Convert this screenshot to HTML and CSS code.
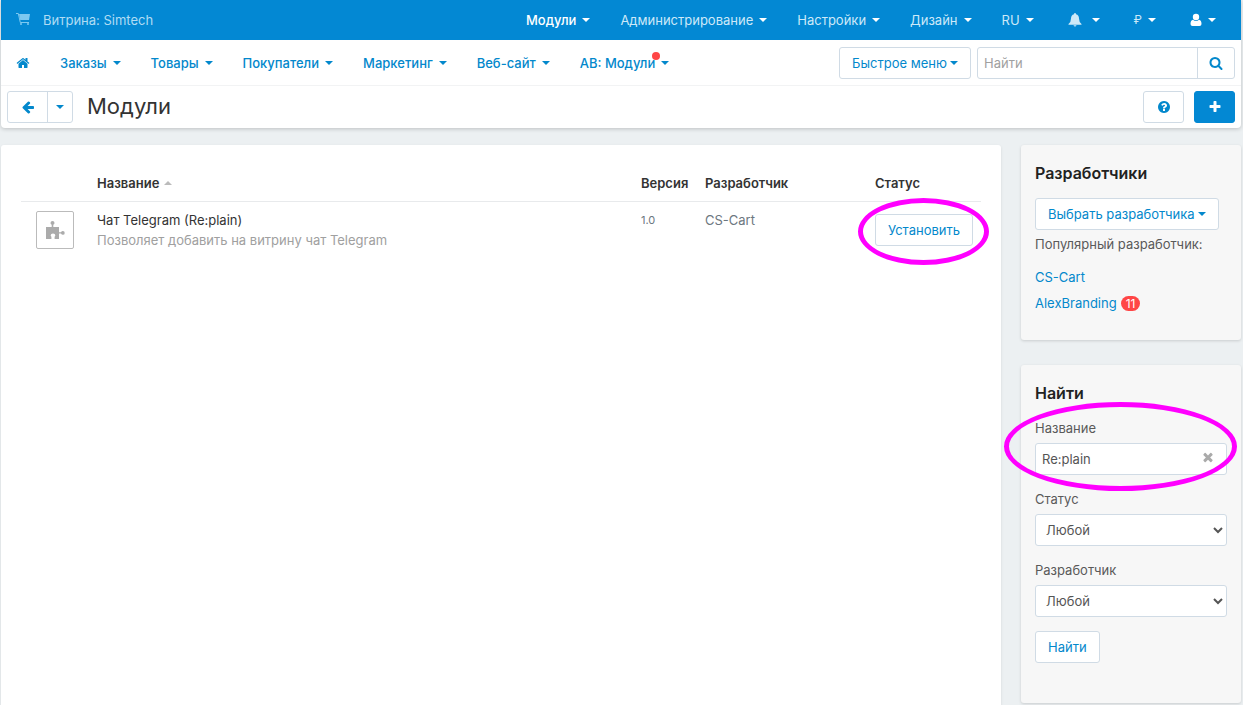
FILE: index.html
```html
<!DOCTYPE html>
<html lang="ru">
<head>
<meta charset="utf-8">
<meta name="viewport" content="width=device-width, initial-scale=1">
<title>Модули</title>
<link rel="stylesheet" href="styles.css">
</head>
<body>
<div class="page">
  <header class="header">
    <div class="topbar">
      <a class="storefront" href="#">
        <svg class="cart-icon" viewBox="0 0 14 14" aria-hidden="true"><path d="M0 .5h2.300L4.300 9.500H13" fill="none" stroke="currentColor"/><path d="M3 1h11l-1 6H4.200z" fill="currentColor"/><circle cx="5" cy="11" r="1" fill="currentColor"/><circle cx="12" cy="11" r="1" fill="currentColor"/></svg>
        <span>Витрина: Simtech</span>
      </a>
      <nav class="menu menu-top" aria-label="Настройки магазина">
        <a class="active" href="#">Модули<i class="caret"></i></a>
        <a href="#">Администрирование<i class="caret"></i></a>
        <a href="#">Настройки<i class="caret"></i></a>
        <a href="#">Дизайн<i class="caret"></i></a>
        <a href="#">RU<i class="caret"></i></a>
        <a class="symbol notify" href="#" aria-label="Уведомления"><svg class="bell-icon" viewBox="0 0 14 14" aria-hidden="true"><path d="M7 0q1 0 1 1.200 3 .8 3 4.300 0 3.500 2.500 5.500v.7H.5V11Q3 9 3 5.500 3 2 6 1.200 6 0 7 0zM5.500 12.200h3q-.3 1.300-1.500 1.300t-1.500-1.300z" fill="currentColor"/></svg><i class="caret"></i></a>
        <a class="symbol currency" href="#">₽<i class="caret"></i></a>
        <a class="symbol active" href="#" aria-label="Профиль"><svg class="user-icon" viewBox="0 0 12 14" aria-hidden="true"><circle cx="6" cy="4" r="3.200" fill="currentColor"/><path d="M3 6.700Q.5 7 .5 11 .5 13 2.500 13h7q2 0 2-2 0-4-2.500-4.300Q6 9.200 3 6.700z" fill="currentColor"/></svg><i class="caret"></i></a>
      </nav>
    </div>
    <div class="navbar">
      <nav class="menu menu-main" aria-label="Главное меню">
        <a href="#" aria-label="Главная"><svg class="icon" viewBox="0 0 1792 1792" aria-hidden="true"><path fill="currentColor" d="M1472 992v480q0 26-19 45t-45 19h-384v-384h-256v384h-384q-26 0-45-19t-19-45v-480q0-1 .5-3t.5-3l575-474 575 474q1 2 1 6zm223-69l-62 74q-8 9-21 11h-3q-13 0-21-7l-692-577-692 577q-12 8-24 7-13-2-21-11l-62-74q-8-10-7-23.500t11-21.500l719-599q32-26 76-26t76 26l244 204v-195q0-14 9-23t23-9h192q14 0 23 9t9 23v408l219 182q10 8 11 21.500t-7 23.500z"/></svg></a>
        <a href="#">Заказы<i class="caret"></i></a>
        <a href="#">Товары<i class="caret"></i></a>
        <a href="#">Покупатели<i class="caret"></i></a>
        <a href="#">Маркетинг<i class="caret"></i></a>
        <a href="#">Веб-сайт<i class="caret"></i></a>
        <a href="#"><span class="with-dot">AB: Модули</span><i class="caret"></i></a>
      </nav>
      <div class="tools">
        <button class="btn" type="button">Быстрое меню<i class="caret"></i></button>
        <form class="search">
          <input type="text" placeholder="Найти" aria-label="Найти">
          <button type="button" aria-label="Искать"><svg class="icon" viewBox="0 0 1792 1792" aria-hidden="true"><path fill="currentColor" d="M1216 832q0-185-131.500-316.500t-316.500-131.500-316.500 131.500-131.500 316.500 131.500 316.500 316.500 131.500 316.500-131.500 131.500-316.500zm512 832q0 52-38 90t-90 38q-54 0-90-38l-343-342q-179 124-399 124-143 0-273.500-55.500t-225-150-150-225-55.500-273.500 55.500-273.500 150-225 225-150 273.500-55.500 273.500 55.500 225 150 150 225 55.500 273.500q0 220-124 399l343 343q37 37 37 90z"/></svg></button>
        </form>
      </div>
    </div>
    <div class="actions">
      <div class="back">
        <button type="button" aria-label="Назад"><svg class="icon" viewBox="0 0 1792 1792" aria-hidden="true"><path fill="currentColor" d="M1664 896v128q0 53-32.500 90.500t-84.500 37.500h-704l293 294q38 36 38 90t-38 90l-75 76q-37 37-90 37-52 0-91-37l-651-652q-37-37-37-90 0-52 37-91l651-650q38-38 91-38 52 0 90 38l75 74q38 38 38 91t-38 91l-293 293h704q52 0 84.500 37.500t32.500 90.500z"/></svg></button>
        <button class="back-more" type="button" aria-label="История"><i class="caret"></i></button>
      </div>
      <h1>Модули</h1>
      <button class="btn btn-icon" type="button" aria-label="Помощь"><svg class="icon" viewBox="0 0 1792 1792" aria-hidden="true"><path fill="currentColor" d="M1024 1376v-192q0-14-9-23t-23-9h-192q-14 0-23 9t-9 23v192q0 14 9 23t23 9h192q14 0 23-9t9-23zm256-672q0-88-55.500-163t-138.500-116-170-41q-243 0-371 213-15 24 8 42l132 100q7 6 19 6 16 0 25-12 53-68 86-92 34-24 86-24 48 0 85.500 26t37.500 59q0 38-20 61t-68 45q-63 28-115.500 86.500t-52.500 125.500v36q0 14 9 23t23 9h192q14 0 23-9t9-23q0-19 21.500-49.500t54.500-49.500q32-18 49-28.500t46-35 44.500-48 28-60.500 12.500-81zm384 192q0 209-103 385.500t-279.500 279.500-385.500 103-385.500-103-279.500-279.500-103-385.500 103-385.500 279.500-279.500 385.500-103 385.500 103 279.500 279.500 103 385.500z"/></svg></button>
      <button class="btn btn-icon btn-primary" type="button" aria-label="Добавить"><svg class="icon" viewBox="0 0 1792 1792" aria-hidden="true"><path fill="currentColor" d="M1600 736v192q0 40-28 68t-68 28h-416v416q0 40-28 68t-68 28h-192q-40 0-68-28t-28-68v-416h-416q-40 0-68-28t-28-68v-192q0-40 28-68t68-28h416v-416q0-40 28-68t68-28h192q40 0 68 28t28 68v416h416q40 0 68 28t28 68z"/></svg></button>
    </div>
  </header>

  <div class="columns">
    <main class="content">
      <table class="addons">
        <thead>
          <tr>
            <th class="col-icon"></th>
            <th><a class="sort" href="#">Название<i class="sort-mark"></i></a></th>
            <th class="col-version">Версия</th>
            <th class="col-vendor">Разработчик</th>
            <th class="col-status">Статус</th>
          </tr>
        </thead>
        <tbody>
          <tr>
            <td class="col-icon"><span class="thumb"><svg class="puzzle-icon" viewBox="0 0 20 20" aria-hidden="true"><path fill="currentColor" d="M1 7h5.700V4.700Q5.500 4 5.500 2.900q0-2 2-2t2 2q0 1.100-1.200 1.800V7H14v5.200h2q.6-1.200 1.900-1.200 1.800 0 1.800 1.900t-1.800 1.900q-1.300 0-1.900-1.200h-2V19H9.600v-2.200q.7-.6.700-1.500 0-1.900-2.300-1.900t-2.300 1.900q0 .9.700 1.500V19H1z"/></svg></span></td>
            <td><a class="name" href="#">Чат Telegram (Re:plain)</a><div class="description">Позволяет добавить на витрину чат Telegram</div></td>
            <td class="version">1.0</td>
            <td>CS-Cart</td>
            <td class="col-status"><span class="mark mark-button"><button class="btn" type="button">Установить</button></span></td>
          </tr>
        </tbody>
      </table>
    </main>

    <aside class="sidebar">
      <section class="card">
        <h2>Разработчики</h2>
        <button class="btn" type="button">Выбрать разработчика<i class="caret"></i></button>
        <p>Популярный разработчик:</p>
        <ul class="vendors">
          <li><a href="#">CS-Cart</a></li>
          <li><a href="#">AlexBranding</a><span class="badge">11</span></li>
        </ul>
      </section>
      <section class="card">
        <h2>Найти</h2>
        <form class="filters">
          <div class="field mark mark-field">
            <label for="name">Название</label>
            <div class="clearable">
              <input class="control" id="name" type="text" value="Re:plain">
              <button class="clear" type="button" aria-label="Очистить"><svg class="icon" viewBox="0 0 1792 1792" aria-hidden="true"><path fill="currentColor" d="M1490 1322q0 40-28 68l-136 136q-28 28-68 28t-68-28l-294-294-294 294q-28 28-68 28t-68-28l-136-136q-28-28-28-68t28-68l294-294-294-294q-28-28-28-68t28-68l136-136q28-28 68-28t68 28l294 294 294-294q28-28 68-28t68 28l136 136q28 28 28 68t-28 68l-294 294 294 294q28 28 28 68z"/></svg></button>
            </div>
          </div>
          <div class="field">
            <label for="status">Статус</label>
            <select class="control" id="status"><option>Любой</option></select>
          </div>
          <div class="field">
            <label for="vendor">Разработчик</label>
            <select class="control" id="vendor"><option>Любой</option></select>
          </div>
          <button class="btn" type="button">Найти</button>
        </form>
      </section>
    </aside>
  </div>
</div>
</body>
</html>
```
FILE: styles.css
```css
* { box-sizing: border-box; }

body {
  margin: 0;
  background: #ecf0f2;
  color: #5a5a5a;
  font: 13px/20px Inter, "Liberation Sans", sans-serif;
}

a { color: #0388cc; text-decoration: none; }
button, input, select { font: inherit; margin: 0; }
button { cursor: pointer; }

.page {
  display: flex;
  flex-direction: column;
  min-height: 100vh;
  padding: 0 2px 0 1px;
}

.header {
  background: #fff;
  border-radius: 0 0 4px 4px;
  box-shadow: 0 1px 4px rgba(0, 0, 0, .2);
}

.icon { display: block; width: 14px; height: 14px; }

.caret {
  display: inline-block;
  border: 4px solid transparent;
  border-top-color: currentColor;
  border-bottom: 0;
  vertical-align: middle;
}

.topbar {
  display: flex;
  align-items: center;
  justify-content: space-between;
  height: 40px;
  padding: 0 25px 1px 15px;
  background: #0388d3;
}

.topbar a { color: #cde9f8; }
.topbar .active { color: #fff; }
.topbar .caret { color: #fff; }
.storefront { display: flex; align-items: center; gap: 13px; }
.topbar .storefront { color: #b0dcf3; }
.cart-icon { width: 14px; height: 14px; color: #7cc8f0; }
.menu { display: flex; align-items: center; gap: 30px; }
.menu a { display: flex; align-items: center; gap: 6px; }
.menu-top .active { font-weight: 500; }
.menu-top .symbol { margin-left: 4px; }
.bell-icon { width: 14px; height: 14px; }
.menu .notify { gap: 10px; }
.user-icon { width: 12px; height: 14px; }
.menu .currency { font-size: 12px; }

.navbar {
  display: flex;
  align-items: center;
  justify-content: space-between;
  height: 46px;
  padding: 0 6px 0 15px;
  border-bottom: 1px solid #f2f3f4;
}

.menu-main { font-weight: 500; }

.with-dot { position: relative; }
.with-dot::after {
  content: "";
  position: absolute;
  top: -1px;
  right: -5px;
  width: 8px;
  height: 8px;
  border-radius: 50%;
  background: #ff4646;
}

.tools { display: flex; gap: 6px; }

.btn {
  display: inline-flex;
  align-items: center;
  justify-content: center;
  gap: 3px;
  height: 32px;
  padding: 0 12px;
  border: 1px solid #d0dbe5;
  border-radius: 3px;
  background: #fff;
  color: #0388cc;
  white-space: nowrap;
}

.search {
  display: flex;
  width: 258px;
  height: 32px;
  border: 1px solid #d0dbe5;
  border-radius: 3px;
}

.search input {
  flex: 1;
  min-width: 0;
  padding: 0 6px;
  border: 0;
  background: none;
}

.search input::placeholder { color: #a0a0a0; }

.search button {
  display: grid;
  place-items: center;
  width: 37px;
  padding: 0;
  border: 0;
  border-left: 1px solid #d0dbe5;
  background: none;
  color: #0388cc;
}

.actions {
  display: flex;
  align-items: center;
  gap: 10px;
  height: 42px;
  padding: 0 6px;
}

.back {
  display: flex;
  height: 32px;
  border: 1px solid #d0dbe5;
  border-radius: 3px;
}

.back button {
  display: grid;
  place-items: center;
  width: 39px;
  padding: 0;
  border: 0;
  background: none;
  color: #0388cc;
}

.back .back-more { width: 25px; border-left: 1px solid #d0dbe5; }

h1 {
  flex: 1;
  margin: 0;
  padding: 0 0 2px 4px;
  color: #333;
  font-size: 22px;
  font-weight: 400;
  line-height: 30px;
}

.btn-icon { width: 41px; padding: 0; }
.btn-primary { border-color: #0388d3; background: #0388d3; color: #fff; }

.columns { display: flex; flex: 1; gap: 20px; padding-top: 17px; }

.content {
  flex: 1;
  padding: 20px;
  border-radius: 3px 3px 0 0;
  background: #fff;
  box-shadow: 0 1px 3px rgba(0, 0, 0, .1);
}

.addons { width: 100%; border-collapse: collapse; table-layout: fixed; }
.addons th { padding: 8px 0; color: #333; font-weight: 600; text-align: left; }
.addons thead tr { border-bottom: 1px solid #e8eaec; }
.addons td { padding: 8px 0; color: #6c7780; vertical-align: top; }
.addons .col-icon { width: 76px; padding-left: 15px; }
.addons td.col-icon { padding-top: 9px; }
.addons .col-version { width: 64px; }
.addons .col-vendor { width: 170px; }
.addons .col-status { width: 106px; }
.addons td.col-status { padding: 12px 0; }
.addons .version { font-size: 11px; }
.sort { display: inline-flex; align-items: center; gap: 5px; color: #333; }
.sort-mark { border: 4px solid transparent; border-bottom-color: #bbb; border-top: 0; }
.name { color: #333; }
.description { color: #a0a0a0; }

.thumb {
  display: grid;
  place-items: center;
  width: 38px;
  height: 38px;
  border: 1px solid #bbb;
  border-radius: 2px;
  color: #ababab;
}

.puzzle-icon { width: 20px; height: 20px; }

.mark { position: relative; }
.mark-button { display: inline-flex; }
.mark::after {
  content: "";
  position: absolute;
  border: 5px solid #f0f;
  border-radius: 50%;
  pointer-events: none;
}
.mark-button::after { inset: -16px -16px -19px -17px; }
.mark-field::after { inset: -16px -10px -16px -31px; }

.sidebar { display: flex; flex-direction: column; gap: 25px; width: 220px; }

.card {
  padding: 16px 14px 24px;
  border-radius: 3px;
  background: #f7f7f7;
  box-shadow: 0 1px 3px rgba(0, 0, 0, .15);
}

.card h2 {
  margin: 0;
  color: #222;
  font-size: 16px;
  font-weight: 600;
  line-height: 24px;
}

.card h2 + .btn { margin-top: 13px; }
.card p { margin: 4px 0 0; white-space: nowrap; }
.vendors { margin: 10px 0 0; padding: 0; list-style: none; }
.vendors li { display: flex; align-items: center; gap: 4px; height: 26px; }

.badge {
  padding: 0 5px;
  border-radius: 8px;
  background: #ff4646;
  color: #fff;
  font-size: 12px;
  line-height: 15px;
}

.filters { padding: 13px 0 16px; }
.field { margin-bottom: 14px; }
.field label { display: block; padding-bottom: 5px; }

.control {
  display: block;
  width: 100%;
  height: 32px;
  padding: 0 6px;
  border: 1px solid #d0dbe5;
  border-radius: 3px;
  background: #fff;
  color: #555;
}

select.control { padding: 0 0 0 6px; }
.clearable { position: relative; }

.clear {
  position: absolute;
  top: 7px;
  right: 12px;
  padding: 0;
  border: 0;
  background: none;
  color: #aaa;
}
```
